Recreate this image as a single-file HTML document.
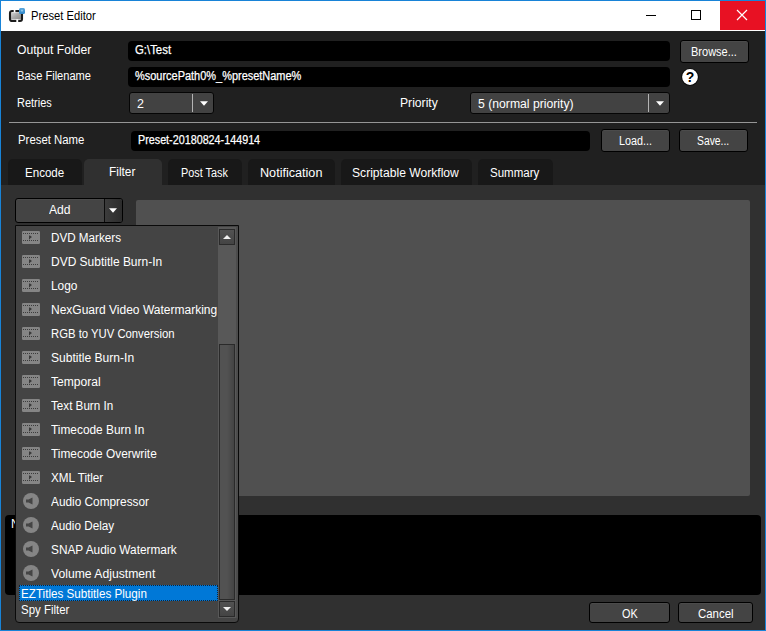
<!DOCTYPE html>
<html><head><meta charset="utf-8"><title>Preset Editor</title>
<style>
*{box-sizing:border-box;margin:0;padding:0}
html,body{width:766px;height:631px;overflow:hidden;background:#202020}
body{position:relative;font-family:"Liberation Sans","DejaVu Sans",sans-serif;font-size:12px;color:#fff;}
.abs,.t,.btn,.inp,.tab,.cmb{position:absolute}
.t{white-space:pre;line-height:16px;height:16px;color:#fff;display:inline-block;transform-origin:0 0}
#win{position:absolute;left:0;top:0;width:766px;height:631px;border:1px solid #1883d7;background:#202020}
#title{position:absolute;left:1px;top:1px;width:764px;height:30px;background:#fff}
.inp{background:#000;border-radius:4px}
.btn{background:#444;border:1px solid #000;border-radius:3px;box-shadow:inset 0 1px 0 #4b4b4b}
.cmb{background:#424242;border:1px solid #050505;border-radius:3px}
.tab{background:#181818;border-radius:5px 5px 0 0}
.tab.sel{background:#303030}
</style></head>
<body>
<div id="win"></div><div id="title"></div>
<svg class="abs" style="left:8px;top:7px" width="18" height="16" viewBox="0 0 18 16"><defs><linearGradient id="ig" x1="0" y1="0" x2="1" y2="1"><stop offset="0" stop-color="#d8d8d8"/><stop offset="0.5" stop-color="#a8a8a8"/><stop offset="1" stop-color="#8a8a8a"/></linearGradient><linearGradient id="ib" x1="0" y1="0" x2="0" y2="1"><stop offset="0" stop-color="#5aa7dc"/><stop offset="1" stop-color="#2f86c8"/></linearGradient></defs><rect x="3" y="5.2" width="10" height="7.4" rx="0.8" fill="url(#ig)"/><rect x="2" y="4" width="12" height="10" rx="2" fill="none" stroke="#1c1c1c" stroke-width="2.1"/><rect x="5.7" y="2.4" width="1.7" height="3" fill="#fff"/><rect x="8.3" y="12.4" width="1.9" height="3" fill="#fff"/><rect x="11" y="0.9" width="6" height="6.2" rx="1.5" fill="url(#ib)"/><circle cx="14" cy="3.6" r="1.1" fill="#9fd0f0" opacity="0.8"/></svg>
<span class="t" id="t0" style="left:30.55px;top:8.0px;font-size:12px;color:#000;transform:scaleX(0.9343);">Preset Editor</span>
<div class="abs" style="left:720px;top:1px;width:45px;height:29px;background:#e81123"></div>
<svg class="abs" style="left:640px;top:1px" width="125" height="30" viewBox="0 0 125 30"><path d="M6 14.5h10" stroke="#000" stroke-width="1"/><rect x="51.5" y="9.5" width="9" height="9" fill="none" stroke="#000" stroke-width="1"/><path d="M97 9l10 10M107 9l-10 10" stroke="#fff" stroke-width="1.2"/></svg>
<span class="t" id="t1" style="left:17.02px;top:42.0px;font-size:12px;color:#fff;transform:scaleX(1.0116);">Output Folder</span>
<span class="t" id="t2" style="left:17.26px;top:68.0px;font-size:12px;color:#fff;transform:scaleX(0.9250);">Base Filename</span>
<span class="t" id="t3" style="left:17.26px;top:95.0px;font-size:12px;color:#fff;transform:scaleX(0.9129);">Retries</span>
<span class="t" id="t4" style="left:400.32px;top:95.0px;font-size:12px;color:#fff;transform:scaleX(1.0127);">Priority</span>
<span class="t" id="t5" style="left:17.55px;top:132.0px;font-size:12px;color:#fff;transform:scaleX(0.9483);">Preset Name</span>
<div class="inp" style="left:128px;top:41px;width:542px;height:20px;"></div>
<div class="inp" style="left:128px;top:67px;width:542px;height:20px;"></div>
<div class="inp" style="left:131px;top:131px;width:459px;height:20px;"></div>
<span class="t" id="t6" style="left:135.20px;top:42.0px;font-size:12px;color:#fff;transform:scaleX(0.9487);-webkit-text-stroke:0.25px #fff;">G:\Test</span>
<span class="t" id="t7" style="left:135.44px;top:68.0px;font-size:12px;color:#fff;transform:scaleX(0.9135);-webkit-text-stroke:0.25px #fff;">%sourcePath0%_%presetName%</span>
<span class="t" id="t8" style="left:138.26px;top:132.0px;font-size:12px;color:#fff;transform:scaleX(0.8971);-webkit-text-stroke:0.25px #fff;">Preset-20180824-144914</span>
<div class="btn" style="left:680px;top:40px;width:69px;height:23px;"></div>
<span class="t" id="t9" style="left:691.20px;top:44.0px;font-size:12px;color:#fff;transform:scaleX(0.9184);">Browse...</span>
<div class="btn" style="left:601px;top:129px;width:69px;height:23px;"></div>
<span class="t" id="t10" style="left:619.43px;top:133.0px;font-size:12px;color:#fff;transform:scaleX(0.8996);">Load...</span>
<div class="btn" style="left:679px;top:129px;width:69px;height:23px;"></div>
<span class="t" id="t11" style="left:697.38px;top:133.0px;font-size:12px;color:#fff;transform:scaleX(0.8612);">Save...</span>
<svg class="abs" style="left:681px;top:68px" width="18" height="18" viewBox="0 0 18 18"><circle cx="9" cy="9" r="8.8" fill="#080808"/><circle cx="9" cy="9" r="7.9" fill="#fff"/><text x="9" y="14" text-anchor="middle" font-family="Liberation Sans,sans-serif" font-weight="bold" font-size="14" fill="#000">?</text></svg>
<div class="cmb" style="left:129px;top:92px;width:85px;height:22px;"></div>
<div class="abs" style="left:192px;top:94px;width:1px;height:18px;background:#b4b4b4"></div>
<svg class="abs" style="left:200.2px;top:101.2px" width="8" height="5" viewBox="0 0 8 5"><path d="M0 0.3h8L4 4.8z" fill="#fff"/></svg>
<div class="cmb" style="left:470px;top:92px;width:200px;height:22px;"></div>
<div class="abs" style="left:648px;top:94px;width:1px;height:18px;background:#b4b4b4"></div>
<svg class="abs" style="left:656.2px;top:101.2px" width="8" height="5" viewBox="0 0 8 5"><path d="M0 0.3h8L4 4.8z" fill="#fff"/></svg>
<span class="t" id="t12" style="left:136.67px;top:96.0px;font-size:12px;color:#fff;transform:scaleX(1.0363);">2</span>
<span class="t" id="t13" style="left:478.38px;top:96.0px;font-size:12px;color:#fff;transform:scaleX(1.0173);">5 (normal priority)</span>
<div class="abs" style="left:9px;top:122px;width:748px;height:1px;background:#969696"></div>
<div class="tab" style="left:8px;top:159px;width:74px;height:26px;"></div>
<span class="t" id="t14" style="left:24.56px;top:165.0px;font-size:12px;color:#fff;transform:scaleX(0.9637);">Encode</span>
<div class="tab sel" style="left:84px;top:159px;width:78px;height:27px;"></div>
<span class="t" id="t15" style="left:108.67px;top:164.0px;font-size:12px;color:#fff;transform:scaleX(0.9881);">Filter</span>
<div class="tab" style="left:168px;top:159px;width:74px;height:26px;"></div>
<span class="t" id="t16" style="left:181.31px;top:165.0px;font-size:12px;color:#fff;transform:scaleX(0.9052);">Post Task</span>
<div class="tab" style="left:248px;top:159px;width:87px;height:26px;"></div>
<span class="t" id="t17" style="left:259.56px;top:165.0px;font-size:12px;color:#fff;transform:scaleX(1.0513);">Notification</span>
<div class="tab" style="left:341px;top:159px;width:131px;height:26px;"></div>
<span class="t" id="t18" style="left:352.20px;top:165.0px;font-size:12px;color:#fff;transform:scaleX(1.0095);">Scriptable Workflow</span>
<div class="tab" style="left:478px;top:159px;width:75px;height:26px;"></div>
<span class="t" id="t19" style="left:490.02px;top:165.0px;font-size:12px;color:#fff;transform:scaleX(0.9610);">Summary</span>
<div class="abs" style="left:1px;top:185px;width:764px;height:445px;background:#303030"></div>
<div class="abs" style="left:136px;top:200px;width:614px;height:296px;background:#505050;border-radius:2px"></div>
<div class="abs" style="left:5px;top:515px;width:756px;height:80px;background:#000;border-radius:4px"></div>
<span class="t" style="left:11px;top:516px;font-size:12px">N</span>
<div class="btn" style="left:589px;top:602px;width:81px;height:21px;"></div>
<span class="t" id="t20" style="left:621.79px;top:606.0px;font-size:12px;color:#fff;transform:scaleX(0.9044);">OK</span>
<div class="btn" style="left:678px;top:602px;width:75px;height:21px;"></div>
<span class="t" id="t21" style="left:698.43px;top:606.0px;font-size:12px;color:#fff;transform:scaleX(0.9524);">Cancel</span>
<div class="btn" style="left:15px;top:198px;width:108px;height:25px;"></div>
<div class="abs" style="left:105px;top:199px;width:17px;height:23px;background:linear-gradient(90deg,#3c3c3c,#2c2c2c);border-radius:0 2px 2px 0"></div>
<div class="abs" style="left:104px;top:199px;width:1px;height:23px;background:#0c0c0c"></div>
<span class="t" id="t22" style="left:49.20px;top:202.0px;font-size:12px;color:#fff;transform:scaleX(1.0112);">Add</span>
<svg class="abs" style="left:109px;top:208px" width="8" height="5" viewBox="0 0 8 5"><path d="M0 0.3h8L4 4.8z" fill="#fff"/></svg>
<div class="abs" style="left:15px;top:225px;width:224px;height:398px;background:#444;border:1px solid #0a0a0a;border-radius:0 0 4px 4px"></div>
<div class="abs" style="left:218px;top:227px;width:18px;height:391px;background:#585858"></div>
<div class="abs" style="left:236px;top:227px;width:2px;height:391px;background:#4c4c4c"></div>
<div class="abs" style="left:219px;top:229px;width:16px;height:16px;background:linear-gradient(#525252,#444);border:1px solid #2a2a2a"></div>
<div class="abs" style="left:219px;top:601px;width:16px;height:16px;background:linear-gradient(#525252,#444);border:1px solid #2a2a2a"></div>
<div class="abs" style="left:219px;top:344px;width:16px;height:256px;background:linear-gradient(90deg,#525252,#525252 50%,#444);border:1px solid #2a2a2a"></div>
<svg class="abs" style="left:223px;top:235px" width="8" height="4" viewBox="0 0 8 4"><path d="M0 4L4 0l4 4z" fill="#f0f0f0"/></svg>
<svg class="abs" style="left:223px;top:607px" width="8" height="4" viewBox="0 0 8 4"><path d="M0 0h8L4 4z" fill="#f0f0f0"/></svg>
<svg class="abs" style="left:22px;top:231px" width="18" height="13" viewBox="0 0 18 13"><rect width="18" height="13" rx="1.2" fill="#858585"/><path d="M1 2.5h16M1 9.5h16" stroke="#3c3c3c" stroke-width="1" stroke-dasharray="1 1"/><path d="M7 4.5h1l2 1.5-2 1.5v0.7h-1z" fill="#3a3a3a"/></svg>
<span class="t" id="t23" style="left:50.67px;top:230.0px;font-size:12px;color:#fff;transform:scaleX(0.9718);">DVD Markers</span>
<svg class="abs" style="left:22px;top:255px" width="18" height="13" viewBox="0 0 18 13"><rect width="18" height="13" rx="1.2" fill="#858585"/><path d="M1 2.5h16M1 9.5h16" stroke="#3c3c3c" stroke-width="1" stroke-dasharray="1 1"/><path d="M7 4.5h1l2 1.5-2 1.5v0.7h-1z" fill="#3a3a3a"/></svg>
<span class="t" id="t24" style="left:50.67px;top:254.0px;font-size:12px;color:#fff;transform:scaleX(0.9979);">DVD Subtitle Burn-In</span>
<svg class="abs" style="left:22px;top:279px" width="18" height="13" viewBox="0 0 18 13"><rect width="18" height="13" rx="1.2" fill="#858585"/><path d="M1 2.5h16M1 9.5h16" stroke="#3c3c3c" stroke-width="1" stroke-dasharray="1 1"/><path d="M7 4.5h1l2 1.5-2 1.5v0.7h-1z" fill="#3a3a3a"/></svg>
<span class="t" id="t25" style="left:50.67px;top:278.0px;font-size:12px;color:#fff;transform:scaleX(0.9916);">Logo</span>
<svg class="abs" style="left:22px;top:303px" width="18" height="13" viewBox="0 0 18 13"><rect width="18" height="13" rx="1.2" fill="#858585"/><path d="M1 2.5h16M1 9.5h16" stroke="#3c3c3c" stroke-width="1" stroke-dasharray="1 1"/><path d="M7 4.5h1l2 1.5-2 1.5v0.7h-1z" fill="#3a3a3a"/></svg>
<span class="t" id="t26" style="left:50.67px;top:302.0px;font-size:12px;color:#fff;transform:scaleX(1.0005);">NexGuard Video Watermarking</span>
<svg class="abs" style="left:22px;top:327px" width="18" height="13" viewBox="0 0 18 13"><rect width="18" height="13" rx="1.2" fill="#858585"/><path d="M1 2.5h16M1 9.5h16" stroke="#3c3c3c" stroke-width="1" stroke-dasharray="1 1"/><path d="M7 4.5h1l2 1.5-2 1.5v0.7h-1z" fill="#3a3a3a"/></svg>
<span class="t" id="t27" style="left:51.37px;top:326.0px;font-size:12px;color:#fff;transform:scaleX(0.9420);">RGB to YUV Conversion</span>
<svg class="abs" style="left:22px;top:351px" width="18" height="13" viewBox="0 0 18 13"><rect width="18" height="13" rx="1.2" fill="#858585"/><path d="M1 2.5h16M1 9.5h16" stroke="#3c3c3c" stroke-width="1" stroke-dasharray="1 1"/><path d="M7 4.5h1l2 1.5-2 1.5v0.7h-1z" fill="#3a3a3a"/></svg>
<span class="t" id="t28" style="left:50.79px;top:350.0px;font-size:12px;color:#fff;transform:scaleX(1.0048);">Subtitle Burn-In</span>
<svg class="abs" style="left:22px;top:375px" width="18" height="13" viewBox="0 0 18 13"><rect width="18" height="13" rx="1.2" fill="#858585"/><path d="M1 2.5h16M1 9.5h16" stroke="#3c3c3c" stroke-width="1" stroke-dasharray="1 1"/><path d="M7 4.5h1l2 1.5-2 1.5v0.7h-1z" fill="#3a3a3a"/></svg>
<span class="t" id="t29" style="left:51.32px;top:374.0px;font-size:12px;color:#fff;transform:scaleX(1.0063);">Temporal</span>
<svg class="abs" style="left:22px;top:399px" width="18" height="13" viewBox="0 0 18 13"><rect width="18" height="13" rx="1.2" fill="#858585"/><path d="M1 2.5h16M1 9.5h16" stroke="#3c3c3c" stroke-width="1" stroke-dasharray="1 1"/><path d="M7 4.5h1l2 1.5-2 1.5v0.7h-1z" fill="#3a3a3a"/></svg>
<span class="t" id="t30" style="left:51.32px;top:398.0px;font-size:12px;color:#fff;transform:scaleX(0.9714);">Text Burn In</span>
<svg class="abs" style="left:22px;top:423px" width="18" height="13" viewBox="0 0 18 13"><rect width="18" height="13" rx="1.2" fill="#858585"/><path d="M1 2.5h16M1 9.5h16" stroke="#3c3c3c" stroke-width="1" stroke-dasharray="1 1"/><path d="M7 4.5h1l2 1.5-2 1.5v0.7h-1z" fill="#3a3a3a"/></svg>
<span class="t" id="t31" style="left:51.32px;top:422.0px;font-size:12px;color:#fff;transform:scaleX(0.9894);">Timecode Burn In</span>
<svg class="abs" style="left:22px;top:447px" width="18" height="13" viewBox="0 0 18 13"><rect width="18" height="13" rx="1.2" fill="#858585"/><path d="M1 2.5h16M1 9.5h16" stroke="#3c3c3c" stroke-width="1" stroke-dasharray="1 1"/><path d="M7 4.5h1l2 1.5-2 1.5v0.7h-1z" fill="#3a3a3a"/></svg>
<span class="t" id="t32" style="left:51.32px;top:446.0px;font-size:12px;color:#fff;transform:scaleX(0.9893);">Timecode Overwrite</span>
<svg class="abs" style="left:22px;top:471px" width="18" height="13" viewBox="0 0 18 13"><rect width="18" height="13" rx="1.2" fill="#858585"/><path d="M1 2.5h16M1 9.5h16" stroke="#3c3c3c" stroke-width="1" stroke-dasharray="1 1"/><path d="M7 4.5h1l2 1.5-2 1.5v0.7h-1z" fill="#3a3a3a"/></svg>
<span class="t" id="t33" style="left:51.02px;top:470.0px;font-size:12px;color:#fff;transform:scaleX(0.9756);">XML Titler</span>
<svg class="abs" style="left:23px;top:493px" width="16" height="16" viewBox="0 0 16 16"><circle cx="8" cy="8" r="8" fill="#858585"/><path d="M3 6.5h2.5l4-2v7l-4-2H3z" fill="#454545"/></svg>
<span class="t" id="t34" style="left:51.03px;top:494.0px;font-size:12px;color:#fff;transform:scaleX(0.9862);">Audio Compressor</span>
<svg class="abs" style="left:23px;top:517px" width="16" height="16" viewBox="0 0 16 16"><circle cx="8" cy="8" r="8" fill="#858585"/><path d="M3 6.5h2.5l4-2v7l-4-2H3z" fill="#454545"/></svg>
<span class="t" id="t35" style="left:51.03px;top:518.0px;font-size:12px;color:#fff;transform:scaleX(0.9770);">Audio Delay</span>
<svg class="abs" style="left:23px;top:541px" width="16" height="16" viewBox="0 0 16 16"><circle cx="8" cy="8" r="8" fill="#858585"/><path d="M3 6.5h2.5l4-2v7l-4-2H3z" fill="#454545"/></svg>
<span class="t" id="t36" style="left:50.79px;top:542.0px;font-size:12px;color:#fff;transform:scaleX(0.9875);">SNAP Audio Watermark</span>
<svg class="abs" style="left:23px;top:565px" width="16" height="16" viewBox="0 0 16 16"><circle cx="8" cy="8" r="8" fill="#858585"/><path d="M3 6.5h2.5l4-2v7l-4-2H3z" fill="#454545"/></svg>
<span class="t" id="t37" style="left:51.03px;top:566.0px;font-size:12px;color:#fff;transform:scaleX(1.0151);">Volume Adjustment</span>
<div class="abs" style="left:19px;top:585px;width:199px;height:16px;background:#0078d7;border:1px dotted #10243a"></div>
<span class="t" id="t38" style="left:21.20px;top:586.0px;font-size:12px;color:#fff;transform:scaleX(0.9711);">EZTitles Subtitles Plugin</span>
<span class="t" id="t39" style="left:21.02px;top:602.0px;font-size:12px;color:#fff;transform:scaleX(0.9541);">Spy Filter</span>
</body></html>
